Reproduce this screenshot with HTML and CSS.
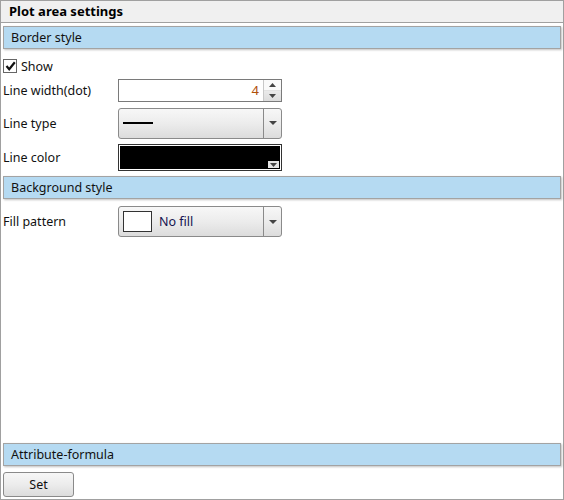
FILE: index.html
```html
<!DOCTYPE html>
<html>
<head>
<meta charset="utf-8">
<link rel="stylesheet" href="styles.css">
</head>
<body>
<div class="panel">
  <div class="title">Plot area settings</div>
  <div class="section">Border style</div>
  <div class="check-row">
    <span class="checkbox">
      <svg width="11" height="11" viewBox="0 0 11 11"><path d="M1.5 5 L4.2 8.2 L9.8 1.2" fill="none" stroke="#111" stroke-width="2.2"/></svg>
    </span>
    <span class="check-label">Show</span>
  </div>
  <div class="row r-width">
    <span class="label">Line width(dot)</span>
    <div class="spin">
      <span class="spin-value">4</span>
      <span class="spin-btns">
        <span class="spin-up"><svg width="7" height="4" viewBox="0 0 7 4"><path d="M0 4 L3.5 0 L7 4Z" fill="#444"/></svg></span>
        <span class="spin-down"><svg width="7" height="4" viewBox="0 0 7 4"><path d="M0 0 L3.5 4 L7 0Z" fill="#444"/></svg></span>
      </span>
    </div>
  </div>
  <div class="row r-type">
    <span class="label">Line type</span>
    <div class="combo tall">
      <span class="combo-body"><span class="line-sample"></span></span>
      <span class="combo-arrow"><svg width="8" height="4" viewBox="0 0 8 4"><path d="M0 0 L4 4 L8 0Z" fill="#444"/></svg></span>
    </div>
  </div>
  <div class="row r-color">
    <span class="label">Line color</span>
    <div class="colorbox">
      <span class="swatch"></span>
      <span class="color-arrow"><svg width="7" height="4" viewBox="0 0 7 4"><path d="M0 0 L3.5 4 L7 0Z" fill="#444"/></svg></span>
    </div>
  </div>
  <div class="section s2">Background style</div>
  <div class="row r-fill">
    <span class="label">Fill pattern</span>
    <div class="combo tall">
      <span class="combo-body"><span class="fill-swatch"></span><span class="fill-text">No fill</span></span>
      <span class="combo-arrow"><svg width="8" height="4" viewBox="0 0 8 4"><path d="M0 0 L4 4 L8 0Z" fill="#444"/></svg></span>
    </div>
  </div>
  <div class="spacer"></div>
  <div class="section s3">Attribute-formula</div>
  <div class="footer"><button class="btn">Set</button></div>
</div>
</body>
</html>
```
FILE: styles.css
```css
* { box-sizing: border-box; }
html, body { margin: 0; padding: 0; background: #fff; }
body { font-family: "Noto Sans", "DejaVu Sans", sans-serif; font-size: 12px; color: #111; }
.panel {
  width: 564px; height: 500px;
  border: 1px solid #a0a0a0;
  display: flex; flex-direction: column;
  background: #fff;
}
.title {
  height: 22px; line-height: 20px;
  background: #f0f0f0;
  border-bottom: 1px solid #a0a0a0;
  font-weight: bold; font-size: 13px;
  padding-left: 8px;
  color: #000;
}
.section {
  margin: 3px 2px 0 2px;
  height: 23px; line-height: 21px;
  background: #b5daf2;
  border: 1px solid #a3a3a3;
  box-shadow: 1px 1px 2px rgba(0,0,0,0.25);
  padding-left: 7px;
  font-size: 12.5px;
  color: #111;
}
.check-row {
  display: flex; align-items: center;
  height: 18px; margin-top: 8px; padding-left: 2px;
}
.checkbox {
  width: 14px; height: 14px;
  border: 1px solid #666;
  background: #fff;
  display: flex; align-items: center; justify-content: center;
}
.check-label { margin-left: 4px; font-size: 12.5px; }
.row {
  display: flex; align-items: center;
  padding-left: 2px;
}
.label { width: 115px; font-size: 12.5px; }
.r-width { margin-top: 4px; height: 23px; }
.r-type { margin-top: 5px; height: 32px; }
.r-color { margin-top: 5px; height: 27px; }
.r-fill { margin-top: 7px; height: 31px; }
.s2 { margin-top: 5px; }
.spin {
  width: 164px; height: 23px;
  border: 1px solid #7a7a7a;
  display: flex; background: #fff;
}
.spin-value {
  flex: 1; text-align: right; padding-right: 4px;
  line-height: 21px; color: #b0500a; font-size: 13px;
}
.spin-btns {
  width: 18px; border-left: 1px solid #c8c8c8;
  display: flex; flex-direction: column;
}
.spin-up, .spin-down {
  flex: 1; display: flex; align-items: center; justify-content: center;
}
.spin-up { background: #fafafa; border-bottom: 1px solid #e2e2e2; }
.spin-down { background: linear-gradient(#eaeaea, #dcdcdc); }
.combo {
  width: 164px;
  border: 1px solid #8a8a8a;
  border-radius: 3px;
  background: linear-gradient(#f7f7f7, #ececec 50%, #dcdcdc);
  display: flex;
}
.combo.tall { height: 31px; }
.combo-body { flex: 1; display: flex; align-items: center; padding-left: 4px; }
.combo-arrow {
  width: 18px; border-left: 1px solid #8a8a8a;
  display: flex; align-items: center; justify-content: center;
}
.line-sample { width: 30px; height: 2px; background: #000; margin-left: 0; }
.colorbox {
  width: 164px; height: 27px;
  border: 1px solid #333;
  padding: 1px;
  position: relative;
  background: #fff;
}
.swatch { display: block; width: 100%; height: 100%; background: #000; }
.color-arrow {
  position: absolute; right: 2px; bottom: 2px;
  width: 11px; height: 7px; background: #e4e4e4;
  display: flex; align-items: center; justify-content: center;
}
.fill-swatch {
  width: 29px; height: 21px; border: 1px solid #333; background: #fff;
}
.fill-text { margin-left: 7px; font-size: 12.5px; color: #141450; }
.spacer { flex: 1; }
.footer { padding: 6px 0 2px 2px; }
.btn {
  width: 71px; height: 25px;
  border: 1px solid #8a8a8a; border-radius: 3px;
  background: linear-gradient(#f7f7f7, #ececec 50%, #dcdcdc);
  font-family: inherit; font-size: 12.5px; color: #111;
  padding: 0; display: block;
}
```
